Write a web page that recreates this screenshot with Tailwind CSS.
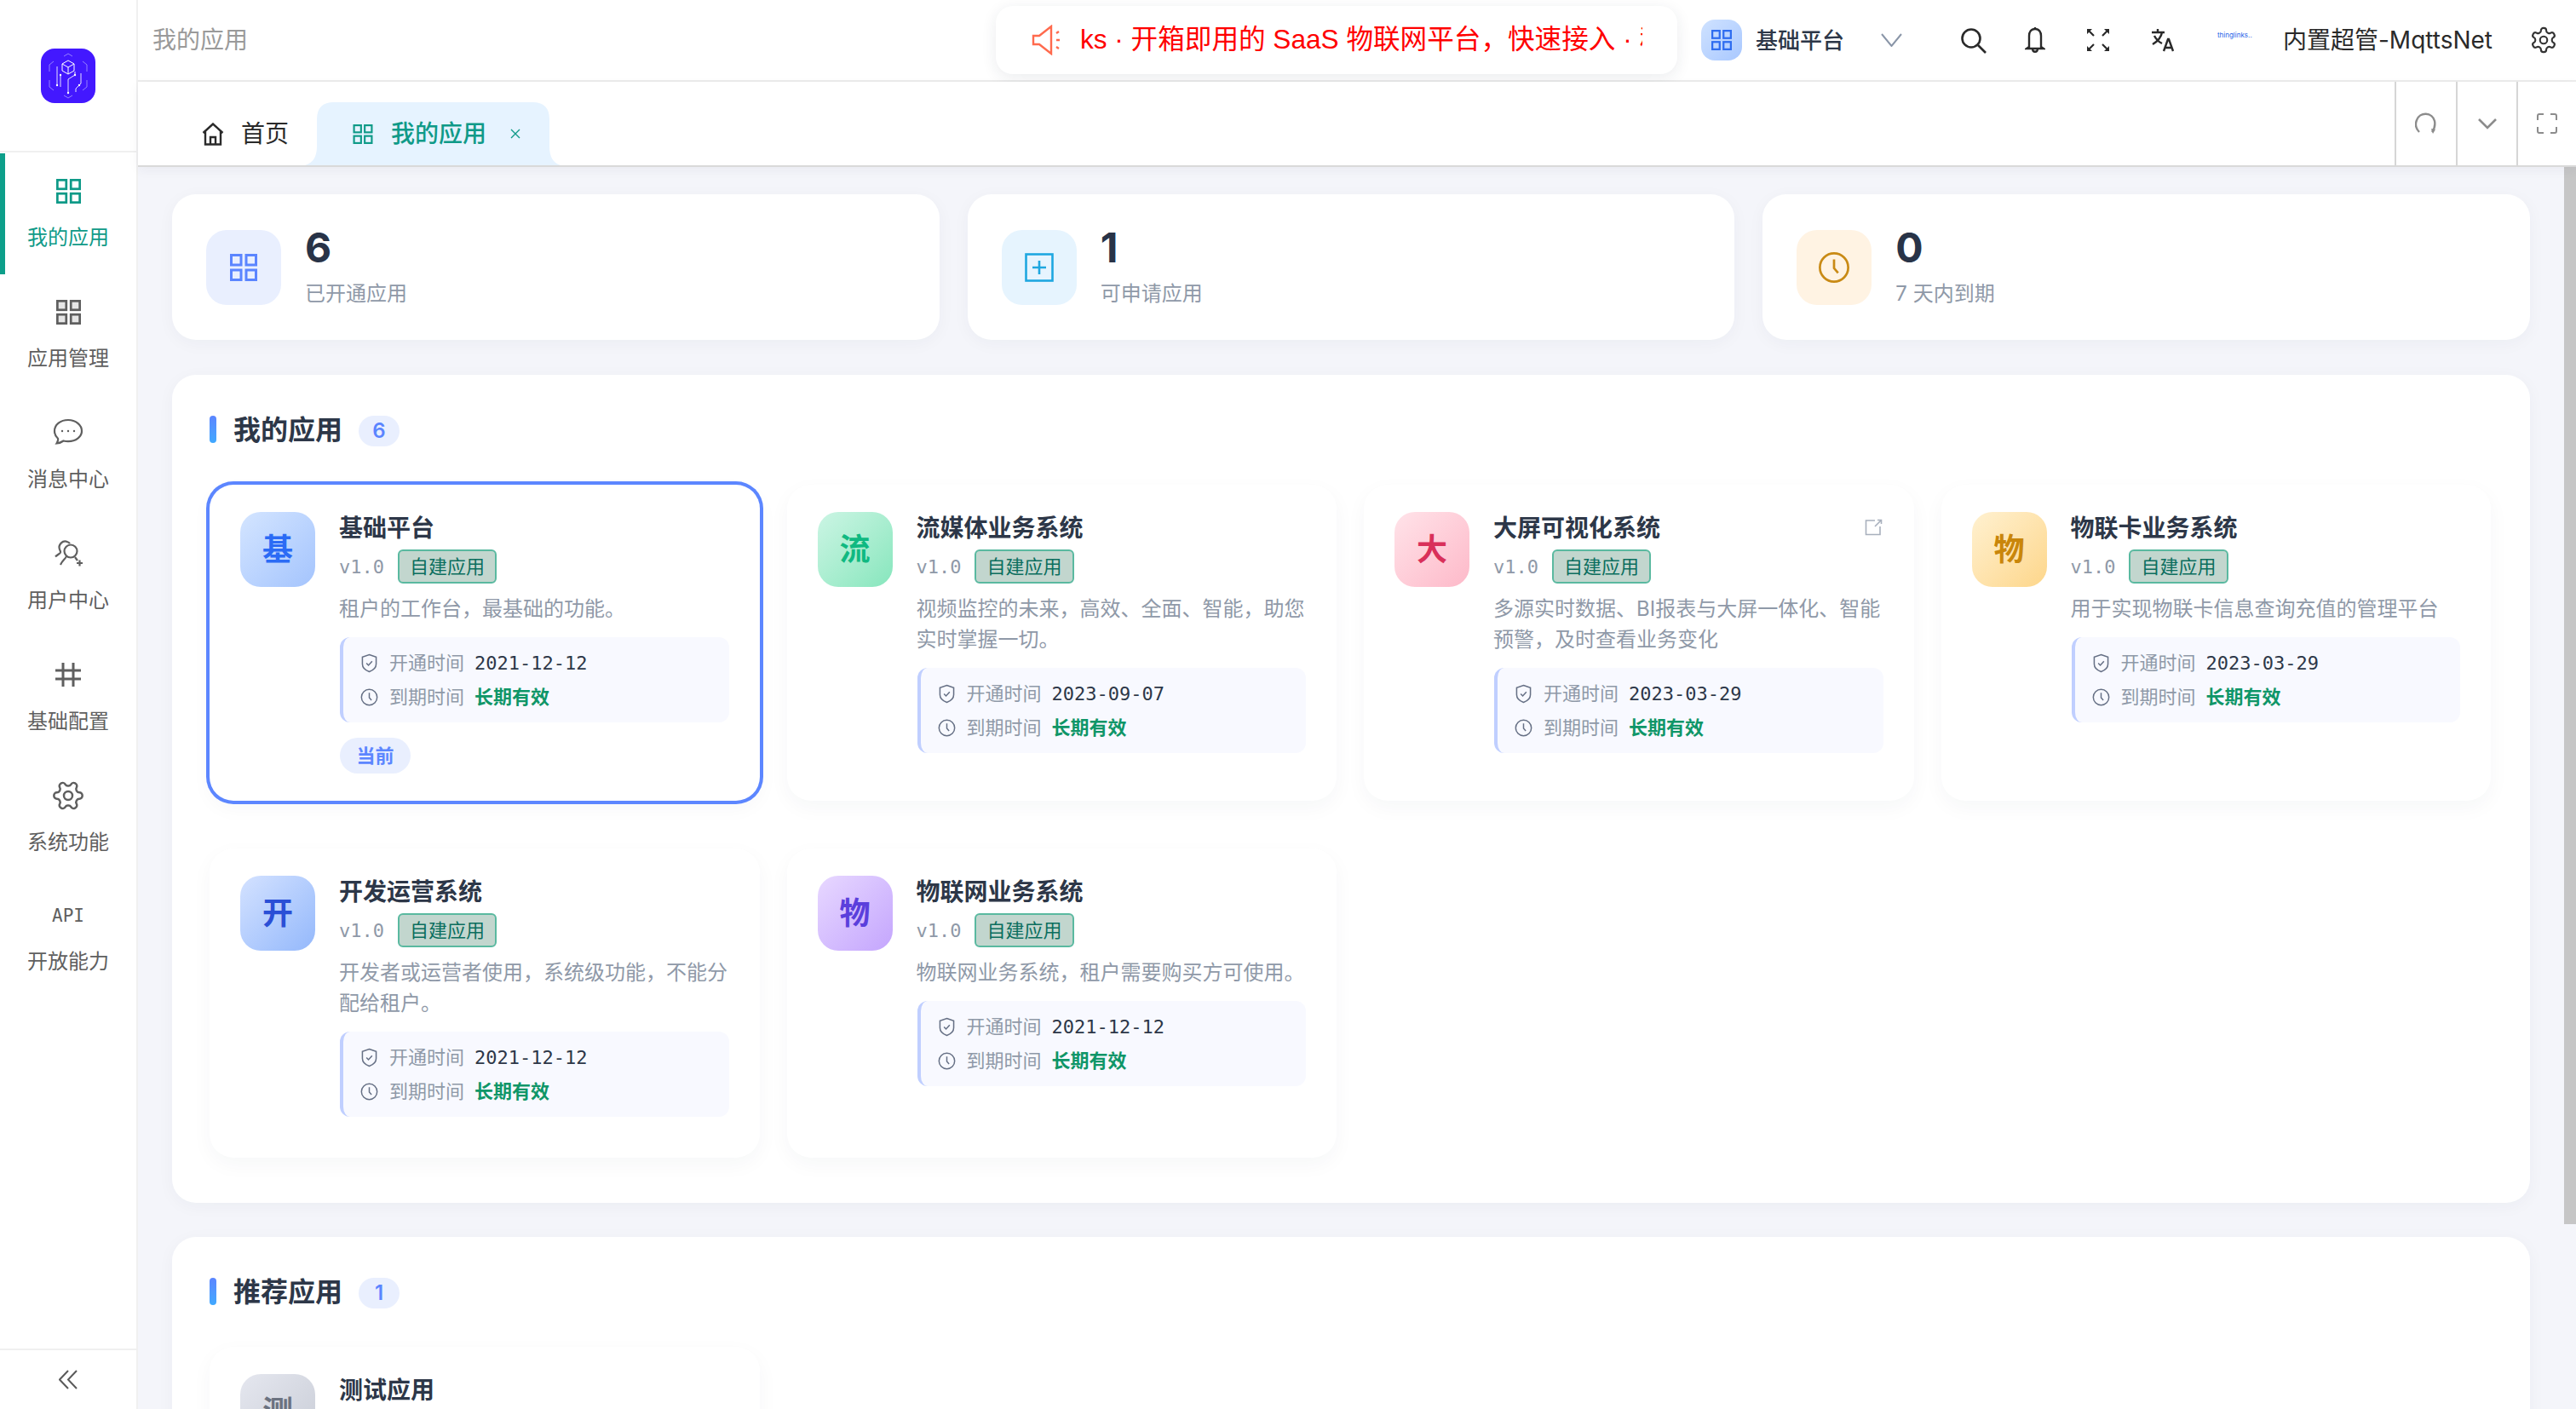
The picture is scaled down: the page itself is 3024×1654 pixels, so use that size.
<!DOCTYPE html>
<html lang="zh-CN">
<head>
  <meta charset="UTF-8" />
  <title>我的应用</title>
  <script src="https://cdn.jsdelivr.net/npm/@tailwindcss/browser@4"></script>
</head>
<body class="w-[3024px] h-[1654px] overflow-hidden flex bg-[#f4f5fa] font-['Inter','Noto_Sans_CJK_SC',sans-serif] text-[#2d3748]">

  <!-- icon sprites -->
  <svg class="hidden">
    <symbol id="i-grid" viewBox="0 0 32 32" fill="none" stroke="currentColor" stroke-width="3">
      <rect x="1.5" y="1.5" width="11.5" height="11.5" />
      <rect x="19" y="1.5" width="11.5" height="11.5" />
      <rect x="1.5" y="19" width="11.5" height="11.5" />
      <rect x="19" y="19" width="11.5" height="11.5" />
    </symbol>
    <symbol id="i-shield" viewBox="0 0 20 24" fill="none" stroke="currentColor" stroke-width="1.6">
      <path d="M10 1.5 18.5 4.5V13c0 4.500-4 7.800-8.500 9.500C5.500 20.800 1.500 17.500 1.500 13V4.500Z" />
      <path d="m6.500 12 2.500 2.600 4.500-5" />
    </symbol>
    <symbol id="i-clock" viewBox="0 0 24 24" fill="none" stroke="currentColor" stroke-width="1.700">
      <circle cx="12" cy="12" r="10.500" />
      <path d="M12 6v6.500l3 3.500" />
    </symbol>
    <symbol id="i-gear" viewBox="0 0 24 24" fill="none" stroke="currentColor" stroke-width="1.500">
      <path d="M12.220 2h-.44a2 2 0 0 0-2 2v.18a2 2 0 0 1-1 1.730l-.43.25a2 2 0 0 1-2 0l-.15-.08a2 2 0 0 0-2.730.73l-.22.38a2 2 0 0 0 .73 2.730l.15.1a2 2 0 0 1 1 1.720v.51a2 2 0 0 1-1 1.740l-.15.09a2 2 0 0 0-.73 2.730l.22.38a2 2 0 0 0 2.730.73l.15-.08a2 2 0 0 1 2 0l.43.25a2 2 0 0 1 1 1.730V20a2 2 0 0 0 2 2h.44a2 2 0 0 0 2-2v-.18a2 2 0 0 1 1-1.730l.43-.25a2 2 0 0 1 2 0l.15.08a2 2 0 0 0 2.730-.73l.22-.39a2 2 0 0 0-.73-2.730l-.15-.08a2 2 0 0 1-1-1.740v-.5a2 2 0 0 1 1-1.740l.15-.09a2 2 0 0 0 .73-2.730l-.22-.38a2 2 0 0 0-2.730-.73l-.15.08a2 2 0 0 1-2 0l-.43-.25a2 2 0 0 1-1-1.730V4a2 2 0 0 0-2-2z" />
      <circle cx="12" cy="12" r="3" />
    </symbol>
  </svg>

  <!-- sidebar -->
  <aside class="w-[162px] h-full shrink-0 flex flex-col bg-white border-r-2 border-[#f0f0f0]">
    <div class="h-[179px] shrink-0 border-b-2 border-[#f0f0f0] pt-[57px] flex justify-center">
      <div class="w-16 h-16 rounded-2xl bg-[#4318ff] flex items-center justify-center">
        <svg class="w-[50px] h-[54px]" viewBox="0 0 50 54" fill="none" stroke="#a99bff" stroke-width="0.800">
          <path d="M20 4l5-3 5 3M20 50l5 3 5-3M8 10 3 14v8M42 10l5 4v8M3 32v8l5 4M47 32v8l-5 4" />
          <path d="M25 9l7 4v8l-7 4-7-4v-8zM18 13l7 4 7-4M25 17v8" stroke="#fff" stroke-width="1" />
          <path d="M12 16v22M16 26v14M25 31v16M25 31l8-5v-4M40 24v12l-6 6M34 42v4" stroke="#e6e0ff" stroke-width="1" />
          <circle cx="12" cy="38" r="1.200" fill="#fff" stroke="none" />
          <circle cx="16" cy="26" r="1.200" fill="#fff" stroke="none" />
          <circle cx="25" cy="47" r="1.200" fill="#fff" stroke="none" />
          <circle cx="33" cy="26" r="1.200" fill="#fff" stroke="none" />
          <circle cx="38" cy="38" r="1.200" fill="#fff" stroke="none" />
        </svg>
      </div>
    </div>

    <nav class="flex-1 mt-px">
      <a class="relative h-[142px] flex flex-col items-center pt-[30px] text-[#0f9a88]">
        <span class="absolute left-0 top-0 w-[6px] h-full bg-[#0d9f8a]"></span>
        <svg class="w-[29px] h-[29px]"><use href="#i-grid" /></svg>
        <span class="mt-[24px] text-[24px] leading-8">我的应用</span>
      </a>
      <a class="h-[142px] flex flex-col items-center pt-[30px] text-[#5f5f5f]">
        <svg class="w-[29px] h-[29px]" viewBox="0 0 32 32" fill="#e6e6e6" stroke="currentColor" stroke-width="3">
          <rect x="1.500" y="1.500" width="11.500" height="11.500" />
          <rect x="19" y="1.500" width="11.500" height="11.500" />
          <rect x="1.500" y="19" width="11.500" height="11.500" />
          <rect x="19" y="19" width="11.500" height="11.500" />
        </svg>
        <span class="mt-[24px] text-[24px] leading-8">应用管理</span>
      </a>
      <a class="h-[142px] flex flex-col items-center pt-[26px] text-[#5f5f5f]">
        <svg class="w-[36px] h-[36px]" viewBox="0 0 36 36" fill="none" stroke="currentColor" stroke-width="2.200">
          <path d="M18 3C9 3 2 8.500 2 16c0 3.500 1.500 6.500 4 8.800.5 1.500-.5 4-1.500 5.700 3-.3 6-1.500 8-3 1.700.4 3.500.6 5.500.6 9 0 16-5.300 16-12.100S27 3 18 3Z" />
          <circle cx="11" cy="16" r="1.200" fill="currentColor" stroke="none" />
          <circle cx="18" cy="16" r="1.200" fill="currentColor" stroke="none" />
          <circle cx="25" cy="16" r="1.200" fill="currentColor" stroke="none" />
        </svg>
        <span class="mt-[21px] text-[24px] leading-8">消息中心</span>
      </a>
      <a class="h-[142px] flex flex-col items-center pt-[26px] text-[#5f5f5f]">
        <svg class="w-[36px] h-[36px]" viewBox="0 0 36 36" fill="none" stroke="currentColor" stroke-width="2.200">
          <path d="M8 13a7 7 0 0 1 9-9 7 7 0 0 1 3 2M8 13c.8 1.500 1.200 2.500 1 3.500-.3 1.300-3.500 2.500-6 5" />
          <circle cx="21" cy="15" r="7.500" />
          <path d="M16 21c-1 3-5 5-7 10M26 22l3 4M28 29h7M31.500 25.500v7" />
        </svg>
        <span class="mt-[21px] text-[24px] leading-8">用户中心</span>
      </a>
      <a class="h-[142px] flex flex-col items-center pt-[28px] text-[#5f5f5f]">
        <svg class="w-[32px] h-[32px]" viewBox="0 0 32 32" fill="none" stroke="currentColor" stroke-width="3">
          <path d="M10 2v28M22 2v28M1 11h30M1 21h30" />
        </svg>
        <span class="mt-[23px] text-[24px] leading-8">基础配置</span>
      </a>
      <a class="h-[142px] flex flex-col items-center pt-[24px] text-[#5f5f5f]">
        <svg class="w-[40px] h-[40px] rotate-90"><use href="#i-gear" /></svg>
        <span class="mt-[19px] text-[24px] leading-8">系统功能</span>
      </a>
      <a class="h-[142px] flex flex-col items-center pt-[25px] text-[#5f5f5f]">
        <span class="h-[36px] leading-[36px] text-[21px] font-['DejaVu_Sans_Mono',monospace]">API</span>
        <span class="mt-[20px] text-[24px] leading-8">开放能力</span>
      </a>
    </nav>

    <div class="h-[71px] shrink-0 border-t-2 border-[#f0f0f0] flex items-center justify-center text-[#5a5a5a]">
      <svg class="w-[22px] h-[23px]" viewBox="0 0 22 23" fill="none" stroke="currentColor" stroke-width="2">
        <path d="M11 1 1 11.500 11 22M21 1 11 11.500 21 22" />
      </svg>
    </div>
  </aside>

  <div class="flex-1 min-w-0 h-full flex flex-col">
    <!-- top bar -->
    <header class="h-[96px] shrink-0 bg-white border-b-2 border-[#ececec] flex items-center pl-[17px] pr-[21px]">
      <span class="text-[28px] text-[#9a9a9a]">我的应用</span>
      <div class="ml-auto w-[800px] h-[80px] rounded-[20px] bg-white shadow-[0_4px_18px_rgba(30,40,70,0.09)] flex items-center pl-[42px]">
        <svg class="w-[34px] h-[36px] shrink-0" viewBox="0 0 34 36" fill="none" stroke="#ff6a4d" stroke-width="2.400">
          <path d="M2 13h7L23 2v32L9 23H2Z" />
          <path d="M29 10l3-2M29 18h4M29 26l3 2" />
        </svg>
        <div class="ml-[23px] w-[660px] overflow-hidden whitespace-nowrap text-[31.600px] text-[#ff0000] font-['Liberation_Sans','Noto_Sans_CJK_SC',sans-serif]">ks · 开箱即用的 SaaS 物联网平台，快速接入 · 稳定可靠</div>
      </div>
      <div class="ml-[28px] w-12 h-12 rounded-2xl bg-gradient-to-br from-[#cfe2ff] to-[#a9c8ff] flex items-center justify-center text-[#2f6df0]">
        <svg class="w-6 h-6"><use href="#i-grid" /></svg>
      </div>
      <span class="ml-4 text-[26px] font-medium text-[#2d3748]">基础平台</span>
      <svg class="ml-[43px] w-[25px] h-[16px]" viewBox="0 0 25 16" fill="none" stroke="#8a96a8" stroke-width="2"><path d="M1 1l11.500 14L24 1" /></svg>
      <svg class="ml-[68px] w-[31px] h-[31px]" viewBox="0 0 31 31" fill="none" stroke="#2a2a2a" stroke-width="2.600"><circle cx="13" cy="13" r="10.500" /><path d="m21 21 9 9" /></svg>
      <svg class="ml-[45px] w-[24px] h-[32px]" viewBox="0 0 24 32" fill="none" stroke="#2a2a2a" stroke-width="2.400"><path d="M12 3c-5 0-7 4-7 8v13l-3 2h20l-3-2V11c0-4-2-8-7-8ZM12 1v2M9 26c0 5 6 5 6 0" /></svg>
      <svg class="ml-[48px] w-[28px] h-[28px]" viewBox="0 0 28 28" fill="#2a2a2a" stroke="#2a2a2a" stroke-width="2.200">
        <path d="M2 2l7 7M26 2l-7 7M2 26l7-7M26 26l-7-7" />
        <path d="M1 1h6L1 7ZM27 1h-6l6 6ZM1 27h6l-6-6ZM27 27h-6l6-6Z" stroke="none" />
      </svg>
      <svg class="ml-[48px] w-[28px] h-[28px]" viewBox="0 0 28 28" fill="none" stroke="#2a2a2a" stroke-width="2.400">
        <path d="M1 5h15M8 1v4M13 5c-1 6-6 11-11 14M4 9c2 4 5 7 9 9M15 27l5-14h1l5 14M17 23h7" />
      </svg>
      <span class="ml-[50px] w-[41px] text-[8px] leading-3 text-[#1f5fe8] whitespace-nowrap mb-[12px]">thinglinks..</span>
      <span class="ml-[36px] text-[28px] text-[#2a2a2a] whitespace-nowrap">内置超管-MqttsNet</span>
      <svg class="ml-[43px] w-[34px] h-[34px] text-[#333]"><use href="#i-gear" /></svg>
    </header>

    <!-- tabs -->
    <div class="h-[100px] shrink-0 bg-white border-b-2 border-[#d9d9d9] shadow-[0_4px_12px_rgba(30,40,70,0.05)] flex items-end relative z-10">
      <div class="flex items-center h-[74px] pl-[75px] text-[#2a2a2a]">
        <svg class="w-[26px] h-[27px]" viewBox="0 0 26 27" fill="none" stroke="currentColor" stroke-width="2.400"><path d="M1.500 12 13 1.500 24.500 12M4 10v15.500h18V10M10 25.500V17h6v8.500" /></svg>
        <span class="ml-5 text-[28px]">首页</span>
      </div>
      <div class="relative ml-[19px] w-[300px] h-[74px] flex items-center pl-[56px] text-[#0f9a88]">
        <svg class="absolute left-0 top-0 w-[300px] h-[74px]" viewBox="0 0 300 74" fill="#e6f3ff"><path d="M0 74Q14 70 14 52V20Q14 0 34 0H267Q287 0 287 20V52Q287 70 300 74Z" /></svg>
        <svg class="relative w-6 h-[23px]"><use href="#i-grid" /></svg>
        <span class="relative ml-[21px] text-[28px] font-medium">我的应用</span>
        <svg class="relative ml-[28px] w-3 h-3" viewBox="0 0 12 12" fill="none" stroke="currentColor" stroke-width="1.400"><path d="m1 1 10 10M11 1 1 11" /></svg>
      </div>
      <div class="ml-auto h-full flex">
        <div class="w-[72px] border-l-2 border-[#d6d6d6] flex items-center justify-center">
          <svg class="w-[26px] h-[26px]" viewBox="0 0 26 26" fill="none" stroke="#8c8c8c" stroke-width="2.400"><path d="M5 23C1 19 0 14 2 9a11 11 0 0 1 21 1c1 5 0 9-3 13" /><path d="m21 25-2-6 5 1" fill="#8c8c8c" stroke="none" /></svg>
        </div>
        <div class="w-[71px] border-l-2 border-[#d6d6d6] flex items-center justify-center">
          <svg class="w-[22px] h-[13px]" viewBox="0 0 22 13" fill="none" stroke="#8c8c8c" stroke-width="2.600"><path d="m1 1 10 10L21 1" /></svg>
        </div>
        <div class="w-[70px] border-l-2 border-[#d6d6d6] flex items-center justify-center">
          <svg class="w-[24px] h-[24px]" viewBox="0 0 24 24" fill="none" stroke="#8c8c8c" stroke-width="2"><path d="M8 1H3a2 2 0 0 0-2 2v5M16 1h5a2 2 0 0 1 2 2v5M8 23H3a2 2 0 0 1-2-2v-5M16 23h5a2 2 0 0 0 2-2v-5" /></svg>
        </div>
      </div>
    </div>

    <div class="flex-1 min-h-0 flex">
      <!-- content -->
      <main class="flex-1 min-w-0 overflow-hidden px-10 pt-8">
        <div class="grid grid-cols-3 gap-x-[33px]">
          <div class="h-[171px] rounded-[28px] bg-white shadow-[0_4px_20px_rgba(30,40,70,0.04)] flex items-center pl-10">
            <div class="w-[88px] h-[88px] rounded-[24px] bg-[#e9effe] flex items-center justify-center text-[#5b85ff]">
              <svg class="w-8 h-8"><use href="#i-grid" /></svg>
            </div>
            <div class="ml-[28px]">
              <div class="text-[48px] leading-[52px] font-bold text-[#283347]">6</div>
              <div class="mt-[11px] text-[24px] leading-[34px] text-[#8f99a8]">已开通应用</div>
            </div>
          </div>
          <div class="h-[171px] rounded-[28px] bg-white shadow-[0_4px_20px_rgba(30,40,70,0.04)] flex items-center pl-10">
            <div class="w-[88px] h-[88px] rounded-[24px] bg-[#e6f4fe] flex items-center justify-center">
              <svg class="w-[34px] h-[34px]" viewBox="0 0 34 34" fill="none" stroke="#1ea7e0" stroke-width="2.600"><rect x="1.500" y="1.500" width="31" height="31" /><path d="M17 9v16M9 17h16" /></svg>
            </div>
            <div class="ml-[28px]">
              <div class="text-[48px] leading-[52px] font-bold text-[#283347]">1</div>
              <div class="mt-[11px] text-[24px] leading-[34px] text-[#8f99a8]">可申请应用</div>
            </div>
          </div>
          <div class="h-[171px] rounded-[28px] bg-white shadow-[0_4px_20px_rgba(30,40,70,0.04)] flex items-center pl-10">
            <div class="w-[88px] h-[88px] rounded-[24px] bg-[#fff3e3] flex items-center justify-center text-[#c98a15]">
              <svg class="w-[38px] h-[38px]"><use href="#i-clock" /></svg>
            </div>
            <div class="ml-[28px]">
              <div class="text-[48px] leading-[52px] font-bold text-[#283347]">0</div>
              <div class="mt-[11px] text-[24px] leading-[34px] text-[#8f99a8]">7 天内到期</div>
            </div>
          </div>
        </div>

        <!-- my apps -->
        <section class="mt-[41px] rounded-[28px] bg-white shadow-[0_4px_20px_rgba(30,40,70,0.04)] pt-12 pl-11 pr-[46px] pb-[53px]">
          <div class="h-8 mb-[49px] flex items-center">
            <span class="w-2 h-8 rounded-full bg-gradient-to-b from-[#5b85ff] to-[#3fa9ff]"></span>
            <h2 class="ml-[20px] mt-[2px] text-[32px] font-bold text-[#2d3748]">我的应用</h2>
            <span class="ml-[19px] mt-1 w-12 h-9 rounded-full bg-[#e9effe] flex items-center justify-center text-[24px] font-semibold text-[#5b85ff]">6</span>
          </div>
          <div class="grid grid-cols-4 gap-x-8 gap-y-14">

            <article class="rounded-[28px] bg-white ring-4 ring-[#5c86ff] shadow-[0_8px_24px_rgba(30,40,70,0.04)] pt-8 pl-9 pr-9 pb-8 flex gap-[29px]">
              <div class="w-[88px] h-[88px] shrink-0 rounded-[24px] bg-gradient-to-br from-[#d4e5ff] to-[#a4c4fd] flex items-center justify-center text-[36px] font-bold text-[#2b6bf5]">基</div>
              <div class="flex-1 min-w-0">
                <h3 class="-ml-px pt-px h-9 text-[28px] leading-9 font-bold text-[#2d3748]">基础平台</h3>
                <div class="mt-2 h-10 flex items-center">
                  <span class="-ml-px text-[22px] text-[#8f99a8] font-['DejaVu_Sans_Mono',monospace]">v1.0</span>
                  <span class="ml-4 h-10 px-[12px] rounded-md border-2 border-[#5ab9a0] bg-[#c2d6ce] text-[22px] leading-[36px] text-[#0b6e5e]">自建应用</span>
                </div>
                <p class="mt-[12px] -mb-px -ml-px text-[24px] leading-9 text-[#8f99a8]">租户的工作台，最基础的功能。</p>
                <div class="mt-4 h-[100px] rounded-xl border-l-4 border-[#c0cfff] bg-[#f8f9ff] pl-[21px] pt-[14px] flex flex-col gap-2">
                  <div class="h-8 flex items-center"><svg class="w-[19px] h-[23px] text-[#667085]"><use href="#i-shield" /></svg><span class="ml-[14px] w-[88px] whitespace-nowrap text-[22px] text-[#8f99a8]">开通时间</span><span class="ml-3 text-[22px] text-[#2d3748] font-['DejaVu_Sans_Mono',monospace]">2021-12-12</span></div>
                  <div class="h-8 flex items-center"><svg class="w-[21px] h-[21px] -ml-px text-[#667085]"><use href="#i-clock" /></svg><span class="ml-[13px] w-[88px] whitespace-nowrap text-[22px] text-[#8f99a8]">到期时间</span><span class="ml-3 text-[22px] font-bold text-[#0f9668]">长期有效</span></div>
                </div>
                <div class="pt-[18px]"><span class="block w-[83px] h-[42px] rounded-full bg-[#e9effe] text-center text-[22px] leading-[42px] font-bold text-[#5c86ff]">当前</span></div>
              </div>
            </article>

            <article class="rounded-[28px] bg-white shadow-[0_8px_24px_rgba(30,40,70,0.04)] pt-8 pl-9 pr-9 pb-8 flex gap-[29px]">
              <div class="w-[88px] h-[88px] shrink-0 rounded-[24px] bg-gradient-to-br from-[#cbf5e4] to-[#86e6bd] flex items-center justify-center text-[36px] font-bold text-[#10b981]">流</div>
              <div class="flex-1 min-w-0">
                <h3 class="-ml-px pt-px h-9 text-[28px] leading-9 font-bold text-[#2d3748]">流媒体业务系统</h3>
                <div class="mt-2 h-10 flex items-center">
                  <span class="-ml-px text-[22px] text-[#8f99a8] font-['DejaVu_Sans_Mono',monospace]">v1.0</span>
                  <span class="ml-4 h-10 px-[12px] rounded-md border-2 border-[#5ab9a0] bg-[#c2d6ce] text-[22px] leading-[36px] text-[#0b6e5e]">自建应用</span>
                </div>
                <p class="mt-[12px] -mb-px -ml-px text-[24px] leading-9 text-[#8f99a8]">视频监控的未来，高效、全面、智能，助您实时掌握一切。</p>
                <div class="mt-4 h-[100px] rounded-xl border-l-4 border-[#c0cfff] bg-[#f8f9ff] pl-[21px] pt-[14px] flex flex-col gap-2">
                  <div class="h-8 flex items-center"><svg class="w-[19px] h-[23px] text-[#667085]"><use href="#i-shield" /></svg><span class="ml-[14px] w-[88px] whitespace-nowrap text-[22px] text-[#8f99a8]">开通时间</span><span class="ml-3 text-[22px] text-[#2d3748] font-['DejaVu_Sans_Mono',monospace]">2023-09-07</span></div>
                  <div class="h-8 flex items-center"><svg class="w-[21px] h-[21px] -ml-px text-[#667085]"><use href="#i-clock" /></svg><span class="ml-[13px] w-[88px] whitespace-nowrap text-[22px] text-[#8f99a8]">到期时间</span><span class="ml-3 text-[22px] font-bold text-[#0f9668]">长期有效</span></div>
                </div>
                <div class="h-4"></div>
              </div>
            </article>

            <article class="relative rounded-[28px] bg-white shadow-[0_8px_24px_rgba(30,40,70,0.04)] pt-8 pl-9 pr-9 pb-8 flex gap-[29px]">
              <svg class="absolute right-[37px] top-[40px] w-[21px] h-[20px]" viewBox="0 0 21 20" fill="none" stroke="#a8b0bd" stroke-width="1.600"><path d="M12 2H1.500v16.500H18V9M12 9l7.500-7.500M15 1.500h4.500V6" /></svg>
              <div class="w-[88px] h-[88px] shrink-0 rounded-[24px] bg-gradient-to-br from-[#ffe3e9] to-[#fdb9c9] flex items-center justify-center text-[36px] font-bold text-[#d9305a]">大</div>
              <div class="flex-1 min-w-0">
                <h3 class="-ml-px pt-px h-9 text-[28px] leading-9 font-bold text-[#2d3748]">大屏可视化系统</h3>
                <div class="mt-2 h-10 flex items-center">
                  <span class="-ml-px text-[22px] text-[#8f99a8] font-['DejaVu_Sans_Mono',monospace]">v1.0</span>
                  <span class="ml-4 h-10 px-[12px] rounded-md border-2 border-[#5ab9a0] bg-[#c2d6ce] text-[22px] leading-[36px] text-[#0b6e5e]">自建应用</span>
                </div>
                <p class="mt-[12px] -mb-px -ml-px text-[24px] leading-9 text-[#8f99a8]">多源实时数据、BI报表与大屏一体化、智能预警，及时查看业务变化</p>
                <div class="mt-4 h-[100px] rounded-xl border-l-4 border-[#c0cfff] bg-[#f8f9ff] pl-[21px] pt-[14px] flex flex-col gap-2">
                  <div class="h-8 flex items-center"><svg class="w-[19px] h-[23px] text-[#667085]"><use href="#i-shield" /></svg><span class="ml-[14px] w-[88px] whitespace-nowrap text-[22px] text-[#8f99a8]">开通时间</span><span class="ml-3 text-[22px] text-[#2d3748] font-['DejaVu_Sans_Mono',monospace]">2023-03-29</span></div>
                  <div class="h-8 flex items-center"><svg class="w-[21px] h-[21px] -ml-px text-[#667085]"><use href="#i-clock" /></svg><span class="ml-[13px] w-[88px] whitespace-nowrap text-[22px] text-[#8f99a8]">到期时间</span><span class="ml-3 text-[22px] font-bold text-[#0f9668]">长期有效</span></div>
                </div>
                <div class="h-4"></div>
              </div>
            </article>

            <article class="rounded-[28px] bg-white shadow-[0_8px_24px_rgba(30,40,70,0.04)] pt-8 pl-9 pr-9 pb-8 flex gap-[29px]">
              <div class="w-[88px] h-[88px] shrink-0 rounded-[24px] bg-gradient-to-br from-[#fff1d0] to-[#fdd68a] flex items-center justify-center text-[36px] font-bold text-[#c9860a]">物</div>
              <div class="flex-1 min-w-0">
                <h3 class="-ml-px pt-px h-9 text-[28px] leading-9 font-bold text-[#2d3748]">物联卡业务系统</h3>
                <div class="mt-2 h-10 flex items-center">
                  <span class="-ml-px text-[22px] text-[#8f99a8] font-['DejaVu_Sans_Mono',monospace]">v1.0</span>
                  <span class="ml-4 h-10 px-[12px] rounded-md border-2 border-[#5ab9a0] bg-[#c2d6ce] text-[22px] leading-[36px] text-[#0b6e5e]">自建应用</span>
                </div>
                <p class="mt-[12px] -mb-px -ml-px text-[24px] leading-9 text-[#8f99a8]">用于实现物联卡信息查询充值的管理平台</p>
                <div class="mt-4 h-[100px] rounded-xl border-l-4 border-[#c0cfff] bg-[#f8f9ff] pl-[21px] pt-[14px] flex flex-col gap-2">
                  <div class="h-8 flex items-center"><svg class="w-[19px] h-[23px] text-[#667085]"><use href="#i-shield" /></svg><span class="ml-[14px] w-[88px] whitespace-nowrap text-[22px] text-[#8f99a8]">开通时间</span><span class="ml-3 text-[22px] text-[#2d3748] font-['DejaVu_Sans_Mono',monospace]">2023-03-29</span></div>
                  <div class="h-8 flex items-center"><svg class="w-[21px] h-[21px] -ml-px text-[#667085]"><use href="#i-clock" /></svg><span class="ml-[13px] w-[88px] whitespace-nowrap text-[22px] text-[#8f99a8]">到期时间</span><span class="ml-3 text-[22px] font-bold text-[#0f9668]">长期有效</span></div>
                </div>
                <div class="h-4"></div>
              </div>
            </article>

            <article class="rounded-[28px] bg-white shadow-[0_8px_24px_rgba(30,40,70,0.04)] pt-8 pl-9 pr-9 pb-8 flex gap-[29px]">
              <div class="w-[88px] h-[88px] shrink-0 rounded-[24px] bg-gradient-to-br from-[#d4e2ff] to-[#94b8fb] flex items-center justify-center text-[36px] font-bold text-[#2a4fd6]">开</div>
              <div class="flex-1 min-w-0">
                <h3 class="-ml-px pt-px h-9 text-[28px] leading-9 font-bold text-[#2d3748]">开发运营系统</h3>
                <div class="mt-2 h-10 flex items-center">
                  <span class="-ml-px text-[22px] text-[#8f99a8] font-['DejaVu_Sans_Mono',monospace]">v1.0</span>
                  <span class="ml-4 h-10 px-[12px] rounded-md border-2 border-[#5ab9a0] bg-[#c2d6ce] text-[22px] leading-[36px] text-[#0b6e5e]">自建应用</span>
                </div>
                <p class="mt-[12px] -mb-px -ml-px text-[24px] leading-9 text-[#8f99a8]">开发者或运营者使用，系统级功能，不能分配给租户。</p>
                <div class="mt-4 h-[100px] rounded-xl border-l-4 border-[#c0cfff] bg-[#f8f9ff] pl-[21px] pt-[14px] flex flex-col gap-2">
                  <div class="h-8 flex items-center"><svg class="w-[19px] h-[23px] text-[#667085]"><use href="#i-shield" /></svg><span class="ml-[14px] w-[88px] whitespace-nowrap text-[22px] text-[#8f99a8]">开通时间</span><span class="ml-3 text-[22px] text-[#2d3748] font-['DejaVu_Sans_Mono',monospace]">2021-12-12</span></div>
                  <div class="h-8 flex items-center"><svg class="w-[21px] h-[21px] -ml-px text-[#667085]"><use href="#i-clock" /></svg><span class="ml-[13px] w-[88px] whitespace-nowrap text-[22px] text-[#8f99a8]">到期时间</span><span class="ml-3 text-[22px] font-bold text-[#0f9668]">长期有效</span></div>
                </div>
                <div class="h-4"></div>
              </div>
            </article>

            <article class="rounded-[28px] bg-white shadow-[0_8px_24px_rgba(30,40,70,0.04)] pt-8 pl-9 pr-9 pb-8 flex gap-[29px]">
              <div class="w-[88px] h-[88px] shrink-0 rounded-[24px] bg-gradient-to-br from-[#e8d8ff] to-[#c4a5fd] flex items-center justify-center text-[36px] font-bold text-[#5b3fdc]">物</div>
              <div class="flex-1 min-w-0">
                <h3 class="-ml-px pt-px h-9 text-[28px] leading-9 font-bold text-[#2d3748]">物联网业务系统</h3>
                <div class="mt-2 h-10 flex items-center">
                  <span class="-ml-px text-[22px] text-[#8f99a8] font-['DejaVu_Sans_Mono',monospace]">v1.0</span>
                  <span class="ml-4 h-10 px-[12px] rounded-md border-2 border-[#5ab9a0] bg-[#c2d6ce] text-[22px] leading-[36px] text-[#0b6e5e]">自建应用</span>
                </div>
                <p class="mt-[12px] -mb-px -ml-px text-[24px] leading-9 text-[#8f99a8]">物联网业务系统，租户需要购买方可使用。</p>
                <div class="mt-4 h-[100px] rounded-xl border-l-4 border-[#c0cfff] bg-[#f8f9ff] pl-[21px] pt-[14px] flex flex-col gap-2">
                  <div class="h-8 flex items-center"><svg class="w-[19px] h-[23px] text-[#667085]"><use href="#i-shield" /></svg><span class="ml-[14px] w-[88px] whitespace-nowrap text-[22px] text-[#8f99a8]">开通时间</span><span class="ml-3 text-[22px] text-[#2d3748] font-['DejaVu_Sans_Mono',monospace]">2021-12-12</span></div>
                  <div class="h-8 flex items-center"><svg class="w-[21px] h-[21px] -ml-px text-[#667085]"><use href="#i-clock" /></svg><span class="ml-[13px] w-[88px] whitespace-nowrap text-[22px] text-[#8f99a8]">到期时间</span><span class="ml-3 text-[22px] font-bold text-[#0f9668]">长期有效</span></div>
                </div>
                <div class="h-4"></div>
              </div>
            </article>
          </div>
        </section>

        <!-- recommended apps -->
        <section class="mt-10 rounded-[28px] bg-white shadow-[0_4px_20px_rgba(30,40,70,0.04)] pt-12 pl-11 pr-[46px] pb-[53px]">
          <div class="h-8 mb-[49px] flex items-center">
            <span class="w-2 h-8 rounded-full bg-gradient-to-b from-[#5b85ff] to-[#3fa9ff]"></span>
            <h2 class="ml-[20px] mt-[2px] text-[32px] font-bold text-[#2d3748]">推荐应用</h2>
            <span class="ml-[19px] mt-1 w-12 h-9 rounded-full bg-[#e9effe] flex items-center justify-center text-[24px] font-semibold text-[#5b85ff]">1</span>
          </div>
          <div class="grid grid-cols-4 gap-x-8">
            <article class="rounded-[28px] bg-white shadow-[0_8px_24px_rgba(30,40,70,0.04)] pt-8 pl-9 pr-9 pb-8 flex gap-[29px]">
              <div class="w-[88px] h-[88px] shrink-0 rounded-[24px] bg-gradient-to-br from-[#e5e7ef] to-[#c8ccd6] flex items-center justify-center text-[36px] font-bold text-[#6b7280]">测</div>
              <div class="flex-1 min-w-0">
                <h3 class="-ml-px pt-px h-9 text-[28px] leading-9 font-bold text-[#2d3748]">测试应用</h3>
              </div>
            </article>
          </div>
        </section>
      </main>

      <!-- scrollbar -->
      <div class="w-[14px] shrink-0">
        <div class="h-[1241px] bg-[#c6c6c6]"></div>
      </div>
    </div>
  </div>
</body>
</html>
